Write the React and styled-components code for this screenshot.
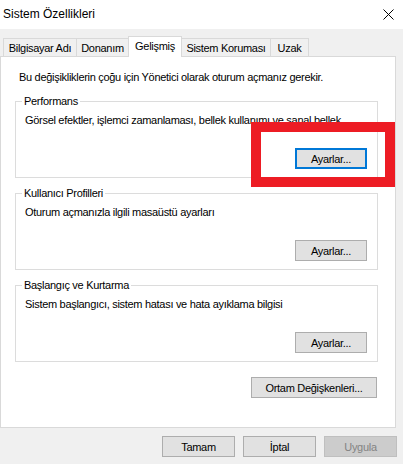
import styled, { createGlobalStyle } from 'styled-components';

const GlobalStyle = createGlobalStyle`
  html, body {
    margin: 0;
    padding: 0;
    background: #f0f0f0;
  }
  body {
    font-family: 'Liberation Sans', Arial, sans-serif;
    font-size: 11px;
    letter-spacing: -0.3px;
    color: #000;
  }
`;

const tabs = [
  { label: 'Bilgisayar Adı', width: 74 },
  { label: 'Donanım', width: 53 },
  { label: 'Gelişmiş', width: 54, active: true },
  { label: 'Sistem Koruması', width: 90 },
  { label: 'Uzak', width: 39 },
];

const groups = [
  {
    title: 'Performans',
    text: 'Görsel efektler, işlemci zamanlaması, bellek kullanımı ve sanal bellek',
    focused: true,
  },
  {
    title: 'Kullanıcı Profilleri',
    text: 'Oturum açmanızla ilgili masaüstü ayarları',
  },
  {
    title: 'Başlangıç ve Kurtarma',
    text: 'Sistem başlangıcı, sistem hatası ve hata ayıklama bilgisi',
  },
];

const App = () => {
  return (
    <Window>
      <GlobalStyle />
      <TitleBar>
        <Title>Sistem Özellikleri</Title>
        <CloseIcon width='11' height='11' viewBox='0 0 11 11'>
          <path d='M0.5 0.5 L10.5 10.5 M10.5 0.5 L0.5 10.5' stroke='#000' strokeWidth='1' />
        </CloseIcon>
      </TitleBar>
      <TabStrip>
        {tabs.map((t) => (
          <Tab key={t.label} w={t.width} active={t.active}>
            {t.label}
          </Tab>
        ))}
      </TabStrip>
      <Panel>
        <Intro>Bu değişikliklerin çoğu için Yönetici olarak oturum açmanız gerekir.</Intro>
        {groups.map((g) => (
          <Group key={g.title}>
            <Legend>{g.title}</Legend>
            <GroupText>{g.text}</GroupText>
            <SettingsButton focused={g.focused}>Ayarlar...</SettingsButton>
          </Group>
        ))}
        <EnvButton>Ortam Değişkenleri...</EnvButton>
      </Panel>
      <Footer>
        <Button>Tamam</Button>
        <Button>İptal</Button>
        <Button disabled>Uygula</Button>
      </Footer>
      <Highlight />
    </Window>
  );
};

const Window = styled.div`
  position: relative;
  width: 403px;
  height: 464px;
  background: #f0f0f0;
  overflow: hidden;
`;

const TitleBar = styled.div`
  height: 29px;
  background: #fff;
  display: flex;
  align-items: center;
  justify-content: space-between;
  padding: 0 9px 0 3px;
`;

const Title = styled.span`
  font-size: 12px;
  line-height: 15px;
  letter-spacing: 0;
`;

const CloseIcon = styled.svg`
  display: block;
`;

const TabStrip = styled.div`
  display: flex;
  align-items: flex-end;
  height: 20px;
  margin-top: 7px;
  padding-left: 3px;
`;

const Tab = styled.div`
  box-sizing: border-box;
  position: relative;
  width: ${(p) => p.w}px;
  height: ${(p) => (p.active ? 21 : 18)}px;
  margin-left: -1px;
  margin-bottom: ${(p) => (p.active ? -1 : 0)}px;
  z-index: ${(p) => (p.active ? 2 : 1)};
  border: 1px solid #d9d9d9;
  border-bottom: none;
  background: ${(p) => (p.active ? '#fff' : '#f0f0f0')};
  display: flex;
  justify-content: center;
  align-items: center;
  padding-bottom: ${(p) => (p.active ? 3 : 0)}px;
  white-space: nowrap;
  &:first-child {
    margin-left: 0;
  }
`;

const Panel = styled.div`
  box-sizing: border-box;
  width: 396px;
  height: 372px;
  background: #fff;
  border: 1px solid #d9d9d9;
  padding: 13px 0 0 14px;
  display: flex;
  flex-direction: column;
  align-items: flex-start;
`;

const Intro = styled.div`
  line-height: 15px;
  margin-left: 4px;
  white-space: nowrap;
`;

const Group = styled.div`
  box-sizing: border-box;
  width: 363px;
  height: 77px;
  margin-top: 15px;
  border: 1px solid #dcdcdc;
  display: flex;
  flex-direction: column;
  align-items: flex-start;
  &:nth-of-type(2) {
    margin-top: 16px;
  }
`;

const Legend = styled.span`
  margin: -8px 0 0 6px;
  padding: 0 2px;
  line-height: 15px;
  background: #fff;
`;

const GroupText = styled.div`
  margin: 4px 0 0 9px;
  line-height: 15px;
  white-space: nowrap;
`;

const Button = styled.button`
  box-sizing: border-box;
  width: 73px;
  height: 21px;
  padding: 0;
  font-family: inherit;
  font-size: 11px;
  letter-spacing: -0.3px;
  color: #000;
  background: #e1e1e1;
  border: 1px solid #adadad;
  border-radius: 0;
  &:disabled {
    background: #cccccc;
    border-color: #bfbfbf;
    color: #838383;
  }
`;

const SettingsButton = styled(Button)`
  width: 72px;
  margin: auto 10px 8px 0;
  align-self: flex-end;
  border-color: ${(p) => (p.focused ? '#0078d7' : '#adadad')};
  box-shadow: ${(p) => (p.focused ? 'inset 0 0 0 1px #0078d7' : 'none')};
`;

const EnvButton = styled(Button)`
  width: 126px;
  margin: 15px 0 0 236px;
`;

const Footer = styled.div`
  display: flex;
  justify-content: flex-end;
  gap: 8px;
  margin-top: 8px;
  padding-right: 6px;
`;

const Highlight = styled.div`
  position: absolute;
  left: 251px;
  top: 122px;
  width: 144px;
  height: 65px;
  box-sizing: border-box;
  border: 10px solid #ed1c24;
  pointer-events: none;
`;

export default App;
